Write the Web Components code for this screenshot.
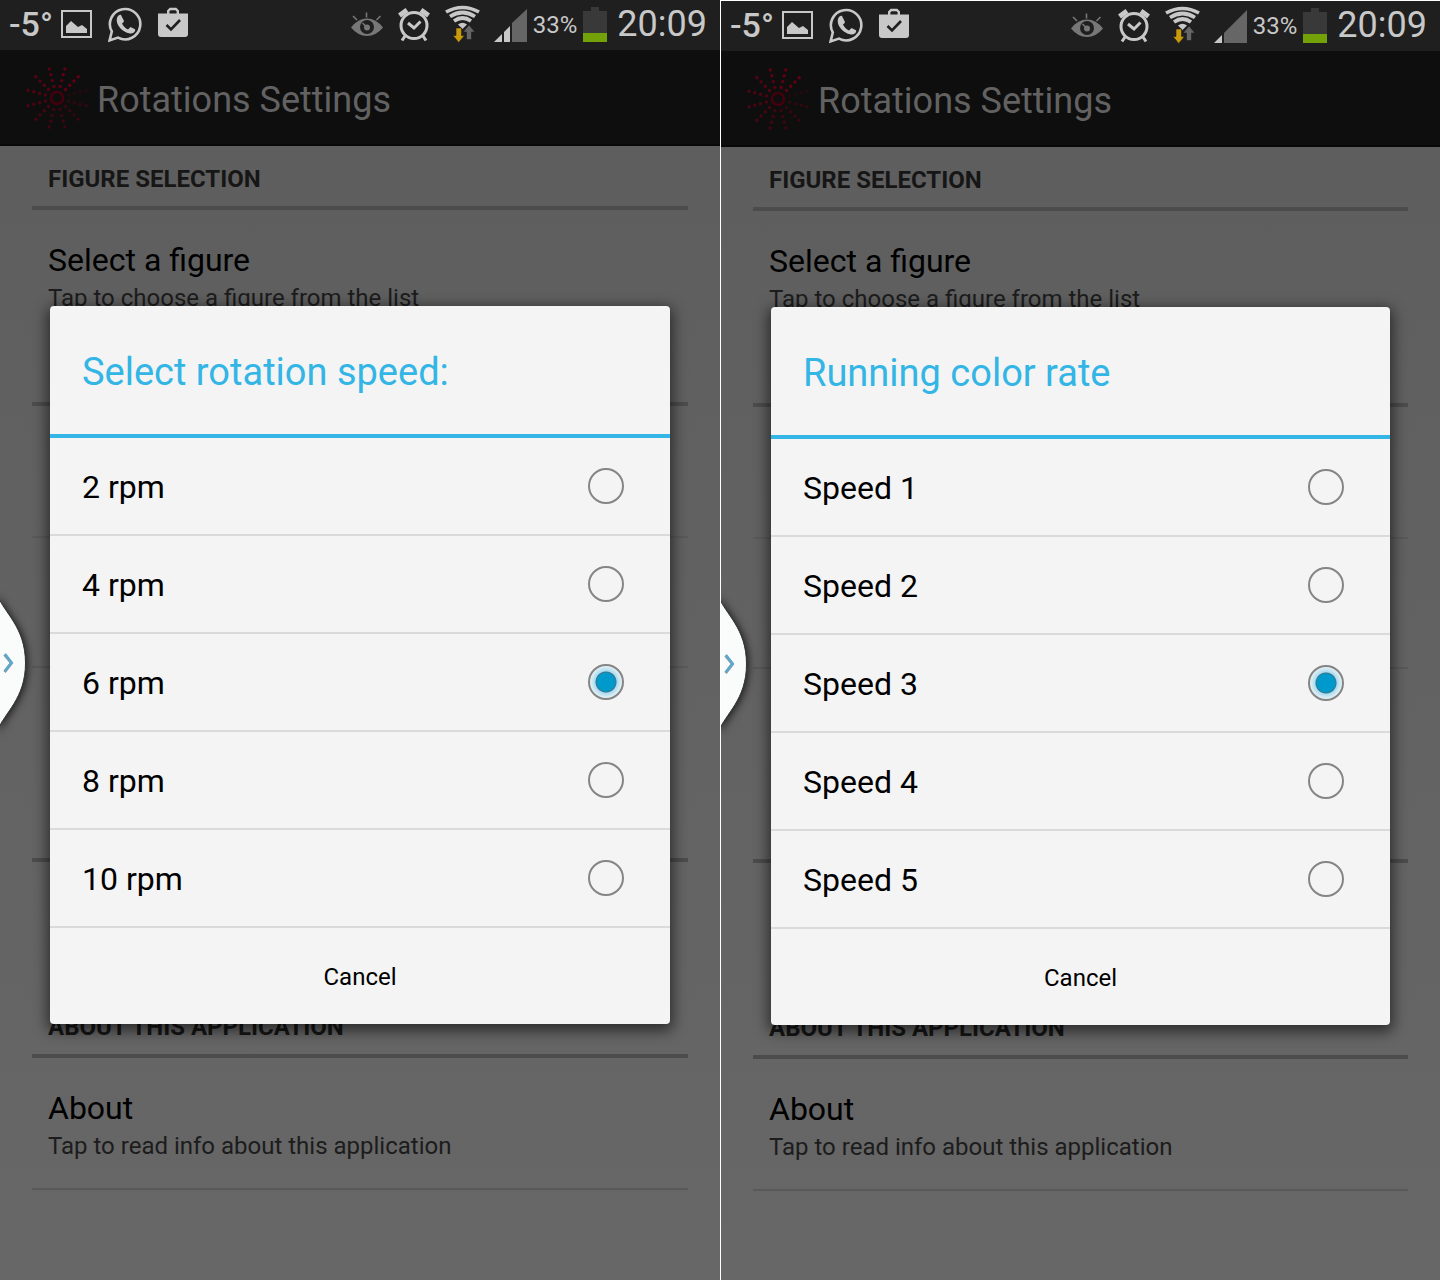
<!DOCTYPE html>
<html lang="en">
<head>
<meta charset="utf-8">
<title>Rotations Settings</title>
<style>
    body {
        margin: 0;
        min-height: 100vh;
        display: grid;
        grid-template-columns: 1fr 1fr;
        background: white;
        font-family: Roboto, "Liberation Sans", sans-serif;
    }

    phone-screen + phone-screen {
        margin: 1px 0 0 1px;
    }
</style>
</head>
<body>

<phone-screen bars="2">
    <choice-dialog slot="dialog" heading="Select rotation speed:" options="2 rpm|4 rpm|6 rpm|8 rpm|10 rpm" selected="2"></choice-dialog>
</phone-screen>
<phone-screen bars="1">
    <choice-dialog slot="dialog" heading="Running color rate" options="Speed 1|Speed 2|Speed 3|Speed 4|Speed 5" selected="2"></choice-dialog>
</phone-screen>

<script>
class StatusBar extends HTMLElement {

    constructor() {
        super();
        this.attachShadow({ mode : 'open' })
    }

    static get styles() {
        return `
        :host {
            display: flex;
            justify-content: space-between;
            height: 50px;
            padding: 0 13px 0 9px;
            background: #1f1f1f;
            color: #c8c8c8;
            line-height: 48px;
        }

        .group {
            display: flex;
            gap: 14px;
        }

        .left {
            gap: 8px;
        }

        .notifications {
            gap: 16px;
        }

        .power {
            gap: 6px;
        }

        .temp {
            font-size: 34px;
            font-weight: 500;
        }

        .percent {
            font-size: 24px;
            line-height: 50px;
        }

        .clock {
            font-size: 36px;
            padding-left: 4px;
        }

        svg {
            display: block;
            flex: none;
        }
        `;
    }

    connectedCallback() {
        this.render();
    }

    get signal() {
        if (this.getAttribute('bars') === '2') {
            return `
                <path fill="#666" d="M18 23 L33 9 V42 H18z"/>
                <path fill="#c8c8c8" d="M0 42 L8 34 V42z M10 32 L16 26 V42 H10z"/>`;
        }
        return `
            <path fill="#666" d="M10 32 L33 9 V42 H10z"/>
            <path fill="#c8c8c8" d="M0 42 L8 34 V42z"/>`;
    }

    render() {
        this.shadowRoot.innerHTML = /* html */`
            <style>${StatusBar.styles}</style>
            <div class="group left">
                <span class="temp">-5°</span>
                <div class="group notifications">
                    <svg width="31" height="50" viewBox="0 0 31 50">
                        <path fill="none" stroke="#c8c8c8" stroke-width="2" d="M1 11h29v26H1z"/>
                        <path fill="#c8c8c8" d="M5 33v-7l5-5 7 6 4-2 5 4v4z"/>
                    </svg>
                    <svg width="34" height="50" viewBox="0 0 34 50">
                        <path fill="none" stroke="#c8c8c8" stroke-width="2.6" d="M1.6 40.4 L3.8 31.5 A15.2 15.2 0 1 1 10 37.6z"/>
                        <path fill="#c8c8c8" d="M9 18c1-3 3-3.500 4-3l3 6c-.5 1.500-1.500 2-2 2.500 1 2.500 3.500 5 6 6l2.500-2.500 4.500 2.200c.7 1-.5 4-4 4.300C16 33.500 7 25 9 18z"/>
                    </svg>
                    <svg width="30" height="50" viewBox="0 0 30 50">
                        <path fill="none" stroke="#c8c8c8" stroke-width="2.4" d="M10.200 14v-3l2-2h5.600l2 2v3"/>
                        <path fill="#c8c8c8" d="M0 13.500h30V34q0 3-3 3H3q-3 0-3-3z"/>
                        <path fill="none" stroke="#1f1f1f" stroke-width="2.600" d="M8.500 25l4.500 4.500 9-9.500"/>
                    </svg>
                </div>
            </div>
            <div class="group">
                <svg width="32" height="50" viewBox="0 0 32 50">
                    <path fill="#777" d="M0 27.500Q7 18.500 16 18.500T32 27.500Q25 36 16 36T0 27.500z"/>
                    <circle cx="16" cy="27" r="7" fill="#1f1f1f"/>
                    <circle cx="16" cy="27.500" r="3" fill="#777"/>
                    <path fill="none" stroke="#777" stroke-width="1.600" d="M16 27.500L11.500 23M15.500 12.500v5M2 16l4 4M29.500 16l-4 4"/>
                </svg>
                <svg width="34" height="50" viewBox="0 0 34 50">
                    <g fill="none" stroke="#c8c8c8">
                        <circle cx="17" cy="25.500" r="13" stroke-width="3"/>
                        <path stroke-width="5" d="M2.500 15.500L10 10M31.500 15.500L24 10"/>
                        <path stroke-width="3" d="M8 36l-3 4.500M26 36l3 4.500M11 23l6 5 6.500-6.500"/>
                    </g>
                </svg>
                <svg width="35" height="50" viewBox="0 0 35 50">
                    <g fill="none" stroke="#c8c8c8" stroke-width="3.700">
                        <path d="M1 12Q17.500 3 34 12"/>
                        <path d="M5 16.500Q17.500 8.500 30 16.500"/>
                        <path d="M9 21Q17.500 15 26 21"/>
                    </g>
                    <path fill="#c8c8c8" d="M13 24.500Q17.500 21 22 24.500L17.500 29z"/>
                    <path fill="#c99b0c" stroke="#1f1f1f" stroke-width=".6" d="M11 28h5.500v7.500h3L13.700 42.500 8 35.500h3z"/>
                    <path fill="#666" stroke="#1f1f1f" stroke-width=".6" d="M21.500 39.500v-7.500h-3.500L24 25l6 7h-3.500v7.500z"/>
                </svg>
                <div class="group power">
                    <svg width="33" height="50" viewBox="0 0 33 50">${this.signal}</svg>
                    <span class="percent">33%</span>
                    <svg width="24" height="50" viewBox="0 0 24 50">
                        <path fill="#393939" d="M0 11h8V7h8v4h8v22H0z"/>
                        <path fill="#73a208" d="M0 33h24v9H0z"/>
                    </svg>
                    <span class="clock">20:09</span>
                </div>
            </div>
        `;
    }

}

class RotationLogo extends HTMLElement {

    constructor() {
        super();
        this.attachShadow({ mode : 'open' })
    }

    connectedCallback() {
        this.render();
    }

    // twelve rays, fading in clockwise
    get rays() {
        let dots = '';
        for (let i = 0; i < 12; i++) {
            const angle = (75 + i * 30) * Math.PI / 180;
            const opacity = i === 0 ? .25 : .35 + i * .055;
            for (const r of [12, 18, 24, 30]) {
                const x = (33 + r * Math.sin(angle)).toFixed(1);
                const y = (33 - r * Math.cos(angle)).toFixed(1);
                dots += `<circle cx="${x}" cy="${y}" r="1.7" opacity="${opacity}"/>`;
            }
        }
        return dots;
    }

    render() {
        this.shadowRoot.innerHTML = /* html */`
            <style>
                :host { display: block; }
                svg { display: block; }
            </style>
            <svg width="64" height="64" viewBox="0 0 64 64" fill="#660014">
                ${this.rays}
                <circle cx="33" cy="33" r="6" fill="none" stroke="#45000d" stroke-width="2.6"/>
            </svg>
        `;
    }

}

class AppBar extends HTMLElement {

    constructor() {
        super();
        this.attachShadow({ mode : 'open' })
    }

    static get styles() {
        return `
        :host {
            display: flex;
            align-items: center;
            gap: 9px;
            height: 94px;
            padding-left: 24px;
            background: #0e0e0e;
            border-bottom: 2px solid #080808;
        }

        h1 {
            margin: 0;
            color: #626262;
            font-size: 36px;
            font-weight: 400;
            line-height: 48px;
            padding-top: 6px;
        }
        `;
    }

    connectedCallback() {
        this.render();
    }

    render() {
        this.shadowRoot.innerHTML = /* html */`
            <style>${AppBar.styles}</style>
            <rotation-logo></rotation-logo>
            <h1><slot></slot></h1>
        `;
    }

}

class SettingsCategory extends HTMLElement {

    constructor() {
        super();
        this.attachShadow({ mode : 'open' })
    }

    static get styles() {
        return `
        :host {
            display: block;
            margin-bottom: 2px;
            border-bottom: 4px solid #4c4c4c;
        }

        h2 {
            margin: 0;
            padding: 6px 16px 0;
            min-height: 54px;
            color: #161616;
            font-size: 24px;
            font-weight: 700;
            line-height: 54px;
            text-transform: uppercase;
        }
        `;
    }

    connectedCallback() {
        this.render();
    }

    render() {
        this.shadowRoot.innerHTML = /* html */`
            <style>${SettingsCategory.styles}</style>
            <h2><slot></slot></h2>
        `;
    }

}

class SettingsItem extends HTMLElement {

    constructor() {
        super();
        this.attachShadow({ mode : 'open' })
    }

    static get styles() {
        return `
        :host {
            display: block;
            box-sizing: border-box;
            height: 130px;
            padding: 28px 16px 0;
            border-bottom: 2px solid #595959;
        }

        :host([last]) {
            border-color: transparent;
        }

        .title {
            color: #000;
            font-size: 32px;
            line-height: 40px;
        }

        .summary {
            color: #1c1c1c;
            font-size: 24px;
            line-height: 36px;
        }
        `;
    }

    connectedCallback() {
        this.render();
    }

    render() {
        this.shadowRoot.innerHTML = /* html */`
            <style>${SettingsItem.styles}</style>
            <div class="title"><slot></slot></div>
            <div class="summary"><slot name="summary"></slot></div>
        `;
    }

}

class EdgeHandle extends HTMLElement {

    constructor() {
        super();
        this.attachShadow({ mode : 'open' })
    }

    static get styles() {
        return `
        :host {
            display: block;
        }

        button {
            display: block;
            padding: 0;
            border: 0;
            background: none;
        }

        svg {
            display: block;
            overflow: visible;
            filter: drop-shadow(1px 1px 4px rgba(0, 0, 0, .8));
        }
        `;
    }

    connectedCallback() {
        this.render();
    }

    render() {
        this.shadowRoot.innerHTML = /* html */`
            <style>${EdgeHandle.styles}</style>
            <button type="button" aria-label="Open panel">
                <svg width="36" height="128" viewBox="0 0 36 128">
                    <path fill="#fafcfc" stroke="#333" d="M-2 -3C4 14 25.500 28 25.500 64S4 114 -2 131z"/>
                    <path fill="none" stroke="#8a9aa3" stroke-width="3" d="M4.500 55.500l7 8.500-7 9"/>
                    <path fill="none" stroke="#5aa9d0" stroke-width="2.400" d="M5 55l6.500 8.500-6.500 8.500"/>
                </svg>
            </button>
        `;
    }

}

class ChoiceDialog extends HTMLElement {

    constructor() {
        super();
        this.attachShadow({ mode : 'open' })
    }

    static get styles() {
        return `
        :host {
            display: block;
        }

        section {
            overflow: hidden;
            border-radius: 4px;
            background: #f4f4f4;
            color: #000;
            box-shadow: 0 4px 14px 3px rgba(0, 0, 0, .55);
        }

        h2 {
            margin: 0;
            padding: 4px 32px 0;
            border-bottom: 4px solid #33b5e5;
            color: #33b5e5;
            font-size: 38px;
            font-weight: 400;
            line-height: 124px;
        }

        label {
            display: flex;
            align-items: center;
            justify-content: space-between;
            height: 96px;
            padding: 0 46px 0 32px;
            border-bottom: 2px solid #dadada;
            font-size: 32px;
        }

        label span {
            padding-top: 2px;
        }

        input {
            appearance: none;
            box-sizing: border-box;
            width: 36px;
            height: 36px;
            margin: 0;
            border: 2px solid #858585;
            border-radius: 50%;
        }

        input:checked {
            background: radial-gradient(circle, #0099cc 9px, #3f7386 10px, #a9dcf0 11px, #e6f1f5 16px);
        }

        button {
            display: block;
            width: 100%;
            height: 96px;
            padding: 2px 0 0;
            border: 0;
            background: none;
            color: #000;
            font-family: inherit;
            font-size: 24px;
        }
        `;
    }

    connectedCallback() {
        this.render();
    }

    get rows() {
        const selected = Number(this.getAttribute('selected'));
        return this.getAttribute('options').split('|').map((text, i) => `
            <label>
                <span>${text}</span>
                <input type="radio" name="choice" ${i === selected ? 'checked' : ''}>
            </label>
        `).join('');
    }

    render() {
        this.shadowRoot.innerHTML = /* html */`
            <style>${ChoiceDialog.styles}</style>
            <section role="dialog" aria-labelledby="heading">
                <h2 id="heading">${this.getAttribute('heading')}</h2>
                ${this.rows}
                <button type="button">Cancel</button>
            </section>
        `;
    }

}

class PhoneScreen extends HTMLElement {

    constructor() {
        super();
        this.attachShadow({ mode : 'open' })
    }

    static get styles() {
        return `
        :host {
            display: flex;
            flex-direction: column;
            position: relative;
            overflow: hidden;
            background: linear-gradient(#5e5e5e 146px, #676767);
        }

        main {
            padding: 0 32px;
        }

        .overlay {
            position: absolute;
            inset: 50px 0 0;
            display: grid;
            align-items: center;
            padding: 0 50px;
        }

        edge-handle {
            position: absolute;
            left: 0;
            top: calc(50% - 41px);
        }
        `;
    }

    connectedCallback() {
        this.render();
    }

    render() {
        this.shadowRoot.innerHTML = /* html */`
            <style>${PhoneScreen.styles}</style>
            <status-bar bars="${this.getAttribute('bars')}"></status-bar>
            <app-bar>Rotations Settings</app-bar>
            <main>
                <settings-category>Figure selection</settings-category>
                <settings-item last>Select a figure<span slot="summary">Tap to choose a figure from the list</span></settings-item>
                <settings-category></settings-category>
                <settings-item></settings-item>
                <settings-item></settings-item>
                <settings-item last></settings-item>
                <settings-category></settings-category>
                <settings-item last></settings-item>
                <settings-category>About this application</settings-category>
                <settings-item>About<span slot="summary">Tap to read info about this application</span></settings-item>
            </main>
            <div class="overlay"><slot name="dialog"></slot></div>
            <edge-handle></edge-handle>
        `;
    }

}

customElements.define('status-bar', StatusBar);
customElements.define('rotation-logo', RotationLogo);
customElements.define('app-bar', AppBar);
customElements.define('settings-category', SettingsCategory);
customElements.define('settings-item', SettingsItem);
customElements.define('edge-handle', EdgeHandle);
customElements.define('choice-dialog', ChoiceDialog);
customElements.define('phone-screen', PhoneScreen);
</script>
</body>
</html>
